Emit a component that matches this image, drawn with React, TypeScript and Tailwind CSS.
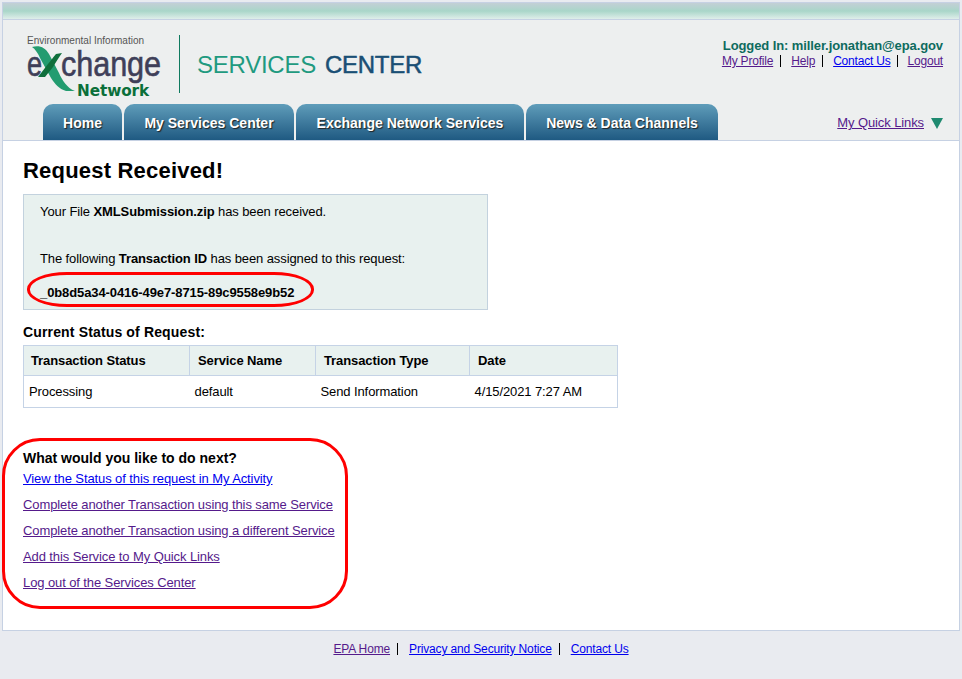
const tabs = [
  { label: "Home", width: "w-[79px]" },
  { label: "My Services Center", width: "w-[170px]" },
  { label: "Exchange Network Services", width: "w-[228px]" },
  { label: "News & Data Channels", width: "w-[192px]" },
];

const columns = [
  { title: "Transaction Status", value: "Processing", width: "w-[166px]" },
  { title: "Service Name", value: "default", width: "w-[126px]" },
  { title: "Transaction Type", value: "Send Information", width: "w-[154px]" },
  { title: "Date", value: "4/15/2021 7:27 AM", width: "w-[148px]" },
];

const nextLinks = [
  { label: "View the Status of this request in My Activity", visited: false },
  { label: "Complete another Transaction using this same Service", visited: true },
  { label: "Complete another Transaction using a different Service", visited: true },
  { label: "Add this Service to My Quick Links", visited: true },
  { label: "Log out of the Services Center", visited: true },
];

function Link({ children, visited }: { children: React.ReactNode; visited?: boolean }) {
  return (
    <a href="#" className={visited ? "text-[#551a8b] underline" : "text-[#0000ee] underline"}>
      {children}
    </a>
  );
}

function Logo() {
  return (
    <svg width="152" height="64" viewBox="0 0 152 64" className="block">
      <text x="0" y="9" fontSize="10" fill="#555" fontFamily="Liberation Sans, sans-serif" textLength="117">
        Environmental Information
      </text>
      <text x="0" y="41" fontSize="35" fill="#3f3f59" stroke="#3f3f59" strokeWidth="0.6" fontFamily="Liberation Sans, sans-serif" textLength="15" lengthAdjust="spacingAndGlyphs">
        e
      </text>
      <text x="34" y="41" fontSize="35" fill="#3f3f59" stroke="#3f3f59" strokeWidth="0.6" fontFamily="Liberation Sans, sans-serif" textLength="100" lengthAdjust="spacingAndGlyphs">
        change
      </text>
      <path d="M5 12 C12 10 18 12 22 19 L32 38 C35 45 40 53 48 56 L39 56 C32 54 28 49 24 43 L13 23 C11 18 8 14 5 12 Z" fill="#239c70" />
      <path d="M35 18 L29 19 C26 22 24 26 21 29 L11 42 L18 42 L26 32 C29 27 32 22 35 18 Z" fill="#0f6f3c" />
      <text x="50" y="61" fontSize="15" fontWeight="700" fill="#0b6f3a" fontFamily="DejaVu Sans, sans-serif" textLength="72" lengthAdjust="spacingAndGlyphs">
        Network
      </text>
    </svg>
  );
}

export default function App() {
  return (
    <div className="min-h-[679px] bg-[#e9ebf0] pt-[2px] font-['Liberation_Sans',Arial,sans-serif] text-[13px] leading-[14px] tracking-[-0.1px] text-black">
      <div className="mx-[2px] border-x border-t border-[#c6d1e3]">
        <div className="h-[17px] border-b border-[#c6d1e3] bg-gradient-to-b from-[#c3cfd6] via-[#a9d6c9] to-[#dfeeea]" />

        <header className="h-[120px] bg-[#edefef]">
          <div className="flex h-[84px] justify-between pr-[16px]">
            <div className="flex pl-[24px] pt-[15px]">
              <div className="w-[152px]">
                <Logo />
              </div>
              <div className="h-[58px] w-px bg-[#0f7a5f]" />
              <div className="ml-[17px] flex h-[60px] items-center gap-[9px] text-[24px] tracking-[-0.25px]">
                <span className="text-[#1f9a80]">SERVICES</span>
                <span className="font-medium text-[#1a4f75] [-webkit-text-stroke:0.5px_#1a4f75]">CENTER</span>
              </div>
            </div>
            <div className="flex flex-col items-end pt-[18px]">
              <div className="text-[13px] font-bold leading-[15px] text-[#0e6b5e]">Logged In: miller.jonathan@epa.gov</div>
              <div className="mt-px flex items-center text-[12px] tracking-[-0.2px]">
                <Link visited>My Profile</Link>
                <span className="ml-[7px] mr-[10px] h-[12px] w-px bg-black" />
                <Link visited>Help</Link>
                <span className="ml-[7px] mr-[10px] h-[12px] w-px bg-black" />
                <Link>Contact Us</Link>
                <span className="ml-[7px] mr-[9px] h-[12px] w-px bg-black" />
                <Link visited>Logout</Link>
              </div>
            </div>
          </div>

          <div className="flex h-[36px] items-stretch justify-between pl-[40px] pr-[16px]">
            <nav className="flex gap-[2px]">
              {tabs.map((tab) => (
                <a
                  key={tab.label}
                  href="#"
                  className={`${tab.width} flex items-center justify-center rounded-t-[10px] bg-gradient-to-b from-[#5f9dba] to-[#1f5a82] pt-[2px] text-[14px] font-bold tracking-normal text-white [text-shadow:1px_1px_1px_#222]`}
                >
                  {tab.label}
                </a>
              ))}
            </nav>
            <div className="flex items-center gap-[7px] pt-[2px]">
              <Link visited>My Quick Links</Link>
              <span className="h-0 w-0 border-x-[6px] border-t-[11px] border-x-transparent border-t-[#1f8a70]" />
            </div>
          </div>
        </header>

        <main className="relative h-[491px] border-y border-[#c6d1e3] bg-white pl-[20px]">
          <h1 className="pt-[17px] text-[22px] font-bold leading-[26px] tracking-[0.2px]">Request Received!</h1>

          <div className="mt-[10px] h-[116px] w-[465px] border border-[#c3d2de] bg-[#e8f1ef] pl-[16px] pt-[10px]">
            <p>
              Your File <b>XMLSubmission.zip</b> has been received.
            </p>
            <p className="mt-[33px]">
              The following <b>Transaction ID</b> has been assigned to this request:
            </p>
            <p className="mt-[20px] font-bold">_0b8d5a34-0416-49e7-8715-89c9558e9b52</p>
          </div>

          <h2 className="mt-[15px] text-[14px] font-bold tracking-[0.15px]">Current Status of Request:</h2>

          <table className="mt-[6px] w-[594px] table-fixed border-collapse border border-[#c5d3e6]">
            <thead>
              <tr className="h-[30px] bg-[#e8f1ef]">
                {columns.map((col) => (
                  <th key={col.title} className={`${col.width} border border-[#c5d3e6] pl-[8px] text-left font-bold first:pl-[7px]`}>
                    {col.title}
                  </th>
                ))}
              </tr>
            </thead>
            <tbody>
              <tr className="h-[32px]">
                {columns.map((col) => (
                  <td key={col.title} className="pl-[5px]">
                    {col.value}
                  </td>
                ))}
              </tr>
            </tbody>
          </table>

          <h2 className="mt-[42px] text-[14px] font-bold leading-[16px] tracking-normal">What would you like to do next?</h2>
          <ul className="mt-[6px] flex flex-col gap-[12px]">
            {nextLinks.map((link) => (
              <li key={link.label}>
                <Link visited={link.visited}>{link.label}</Link>
              </li>
            ))}
          </ul>

          {/* hand drawn highlights on top of the page */}
          <div className="absolute left-[24px] top-[131px] h-[35px] w-[287px] rounded-[40px/17px] border-[3px] border-[#ff0000]" />
          <div className="absolute left-[-1px] top-[297px] h-[171px] w-[346px] rounded-[38px] border-[3px] border-[#ff0000]" />
        </main>
      </div>

      <footer className="flex justify-center pt-[11px] text-[12px] tracking-[-0.15px]">
        <div className="flex items-center">
          <Link visited>EPA Home</Link>
          <span className="ml-[7px] mr-[11px] h-[12px] w-px bg-black" />
          <Link>Privacy and Security Notice</Link>
          <span className="ml-[7px] mr-[11px] h-[12px] w-px bg-black" />
          <Link>Contact Us</Link>
        </div>
      </footer>
    </div>
  );
}
